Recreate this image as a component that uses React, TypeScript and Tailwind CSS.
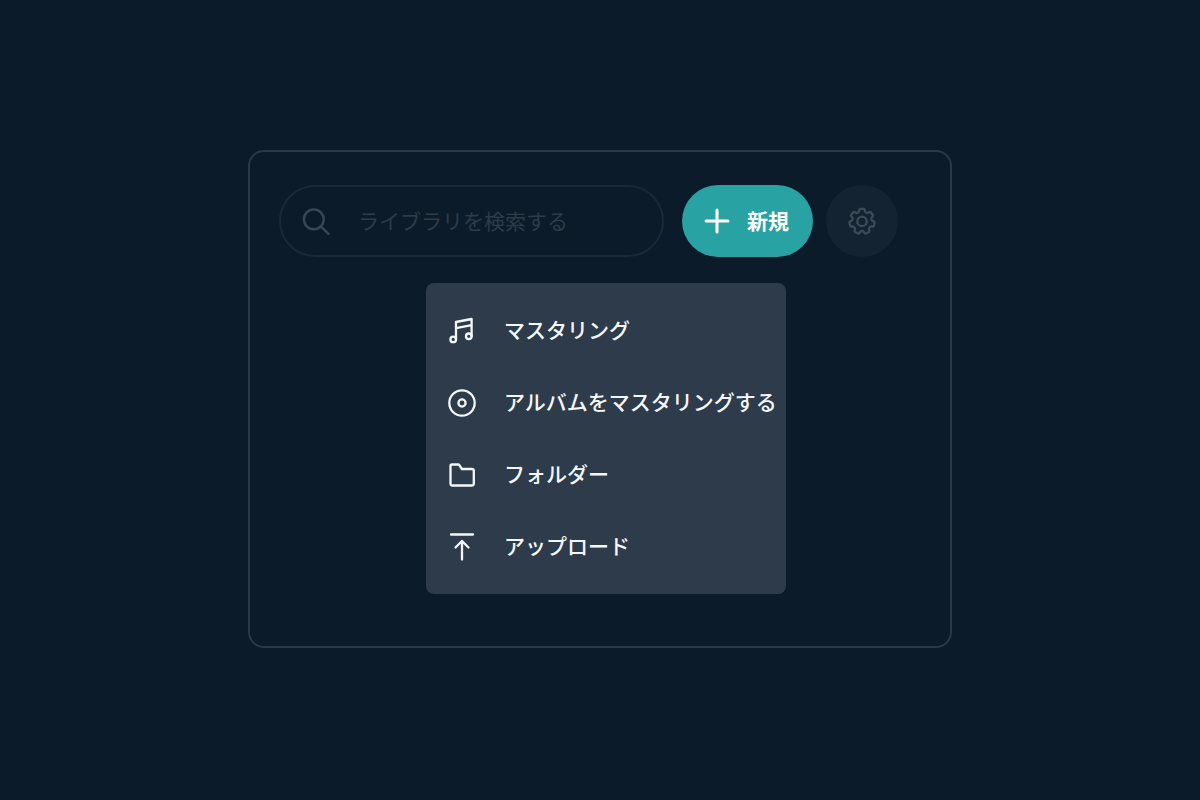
import type { ReactNode } from 'react';

function Icon({ children, className = '', width = 2 }: { children: ReactNode; className?: string; width?: number }) {
  return (
    <svg
      viewBox="0 0 32 32"
      fill="none"
      stroke="currentColor"
      strokeWidth={width}
      strokeLinecap="round"
      strokeLinejoin="round"
      aria-hidden="true"
      className={`size-8 shrink-0 ${className}`}
    >
      {children}
    </svg>
  );
}

// Seven-toothed outline around the centre of the icon's 32-unit box.
function gearPath(): string {
  const teeth = 7;
  const point = (radius: number, degrees: number) => {
    const a = ((degrees - 90) * Math.PI) / 180;
    return `${(16 + radius * Math.cos(a)).toFixed(2)} ${(16.4 + radius * Math.sin(a)).toFixed(2)}`;
  };
  let d = '';
  for (let i = 0; i < teeth; i++) {
    const c = (i * 360) / teeth;
    d += `${i === 0 ? 'M' : 'L'}${point(10.8, c - 15)}`;
    d += `Q${point(12.6, c - 13)} ${point(12.7, c - 8)}`;
    d += `L${point(12.7, c + 8)}`;
    d += `Q${point(12.6, c + 13)} ${point(10.8, c + 15)}`;
    d += `Q${point(8.6, c + 180 / teeth)} ${point(10.8, c + 360 / teeth - 15)}`;
  }
  return d + 'Z';
}

const items = [
  {
    label: 'マスタリング',
    icon: (
      <>
        <circle cx="7.2" cy="24.4" r="2.8" />
        <circle cx="22.8" cy="21.3" r="2.8" />
        <path d="M10 24.4V7L25.6 4v17.3M10 13.2L25.6 10.2" />
      </>
    ),
  },
  {
    label: 'アルバムをマスタリングする',
    icon: (
      <>
        <circle cx="16" cy="16" r="12.7" />
        <circle cx="16" cy="16" r="3.6" />
      </>
    ),
  },
  {
    label: 'フォルダー',
    icon: <path d="M4.5 7A1.5 1.5 0 0 1 6 5.5h6q1 0 1.5.8L15.9 10H26a1.8 1.8 0 0 1 1.8 1.8v12.7a2 2 0 0 1-2 2H6.5a2 2 0 0 1-2-2Z" />,
  },
  {
    label: 'アップロード',
    icon: <path d="M5 3.5h22M16 28.5V10M9.5 16.5L16 10l6.5 6.5" />,
  },
];

export default function App() {
  return (
    <main
      lang="ja"
      className="flex min-h-screen items-center justify-center bg-[#0b1b2a] pb-0.5 font-['Noto_Sans_CJK_JP',sans-serif] text-[21px] leading-8"
    >
      <section className="w-full max-w-[704px] rounded-2xl border-2 border-[#2b3947] pt-[33px] pr-[52px] pb-[52px] pl-[29px]">
        <div className="flex items-center">
          <label className="flex h-[72px] min-w-0 flex-1 items-center rounded-full border-2 border-[#1a2938] pl-[19px]">
            <Icon className="text-[#394653]" width={2.4}>
              <circle cx="13.8" cy="14.3" r="9.9" />
              <path d="M21 21.5l7.5 7.5" />
            </Icon>
            <input
              type="search"
              aria-label="ライブラリを検索する"
              placeholder="ライブラリを検索する"
              className="ml-[26px] min-w-0 flex-1 bg-transparent pb-0.5 text-[#35424f] outline-none placeholder:text-[#2e3b48]"
            />
          </label>
          <button
            type="button"
            aria-haspopup="menu"
            aria-expanded="true"
            className="ml-[18px] flex h-[72px] items-center gap-[14px] rounded-full bg-[#28a2a2] pr-6 pl-[19px] font-bold text-white"
          >
            <Icon width={3}>
              <path d="M16 5v22M5 16h22" />
            </Icon>
            <span className="pb-0.5">新規</span>
          </button>
          <button
            type="button"
            aria-label="設定"
            className="ml-[13px] flex size-[72px] items-center justify-center rounded-full bg-[#132331] text-[#3d4a57]"
          >
            <Icon width={2.3}>
              <path d={gearPath()} />
              <circle cx="16" cy="16.4" r="4.7" />
            </Icon>
          </button>
        </div>

        <div role="menu" className="mt-[26px] mr-28 ml-auto w-[360px] rounded-lg bg-[#2d3b4b] pt-3 pb-[11px]">
          {items.map((item) => (
            <button
              key={item.label}
              type="button"
              role="menuitem"
              className="flex h-[72px] w-full items-center gap-[26px] pl-5 text-left font-medium whitespace-nowrap text-[#f4f7fa]"
            >
              <Icon width={2.3}>{item.icon}</Icon>
              <span className="pb-1">{item.label}</span>
            </button>
          ))}
        </div>
      </section>
    </main>
  );
}
